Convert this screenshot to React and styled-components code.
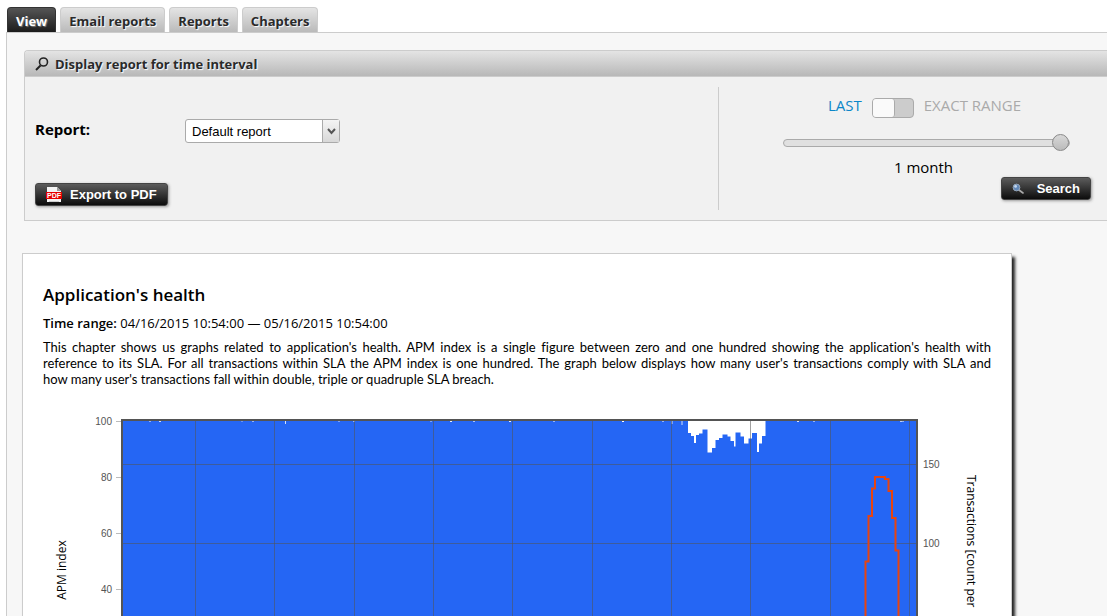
import React, { useState } from 'react'
import styled, { createGlobalStyle } from 'styled-components'

const tabs = ['View', 'Email reports', 'Reports', 'Chapters']

// index drops, [x, y] = start of the step and its depth
const drops = [
    [645, 33], [648, 36], [651, 43], [653, 35], [656, 33.5], [659.5, 29.5],
    [664.5, 52.5], [669, 48], [672.5, 40], [676, 38], [679.5, 34.5], [684.5, 36.5],
    [687.5, 41], [691, 46.5], [692.5, 32.5], [697.5, 36.5], [701, 43.5],
    [705.5, 38.5], [709, 33], [714, 52], [716, 43.5], [719, 36],
]
const dropsEnd = 722.5

const transactions = [
    [822.5, 161.5], [825.5, 116], [829, 88.5], [832, 77], [842, 79],
    [845.5, 91], [849, 118], [852.5, 150.5],
]
const transactionsEnd = 855.5

const gridX = [152.5, 231.5, 311.5, 390.5, 469.5, 549.5, 628.5, 707.5, 787.5, 866.5]
const gridY = [64.5, 143.5]

// single pixel gaps along the top edge
const specks = [
    [106, 0.5], [116, 0.8], [198, 0.3], [209, 0.5], [295, 0.4],
    [310, 0.5], [387, 0.4], [407, 0.9], [430, 0.6], [466, 0.9], [510, 0.5], [579, 1],
    [619, 0.5], [754, 0.8], [770, 0.5], [857, 0.7], [859, 0.5],
]

const dropPath = `M${drops[0][0]} 21` +
    drops.map(([x, y]) => `H${x}V${y}`).join('') + `H${dropsEnd}V21Z`
const transactionPath = `M${transactions[0][0]} 301` +
    transactions.map(([x, y]) => `H${x}V${y}`).join('') + `H${transactionsEnd}V301`

const HealthChart = () => (
    <Chart viewBox="0 0 948 216" role="img" aria-label="Application's health">
        <rect x="79" y="20" width="795" height="282" fill="#2566f4" />
        <path d={dropPath} fill="#fff" />
        {specks.map(([x, opacity]) => (
            <rect key={x} x={x} y="21" width="2" height="1" fill="#fff" opacity={opacity} />
        ))}
        <path d="M242.500 21v3M629 21v3M639 21v4" stroke="#fff" opacity="0.8" />
        <g stroke="#545454" strokeOpacity="0.55">
            {gridX.map(x => <path key={x} d={`M${x} 21V301`} />)}
            {gridY.map(y => <path key={y} d={`M80 ${y}H873`} />)}
        </g>
        <path d={transactionPath} fill="none" stroke="#e8440f" strokeWidth="2" />
        <rect x="79" y="20" width="795" height="282" fill="none" stroke="#545454" strokeWidth="2" />
        {[100, 80, 60, 40].map((value, i) => (
            <g key={value}>
                <path d={`M73 ${21.5 + i * 56}h5`} stroke="#bbb" />
                <text className='tick' x="69" y={25 + i * 56} textAnchor="end">{value}</text>
            </g>
        ))}
        {[150, 100].map((value, i) => (
            <text className='tick' key={value} x="880" y={68 + i * 79}>{value}</text>
        ))}
        <text className='axis' transform="translate(23 170) rotate(-90)" textAnchor="middle">APM index</text>
        <text className='axis' transform="translate(924 75) rotate(90)">Transactions [count per</text>
    </Chart>
)

const Magnifier = () => (
    <svg width="14" height="14" viewBox="0 0 14 14" fill="none" stroke="#222">
        <circle cx="8.500" cy="5" r="4" strokeWidth="1.600" />
        <path d="M5.500 8.500L1 13" strokeWidth="2" />
    </svg>
)

const SearchIcon = () => (
    <svg width="12" height="12" viewBox="0 0 12 12">
        <path d="M7 7l4 3" stroke="#aaa" strokeWidth="1.600" strokeLinecap="round" />
        <circle cx="4.500" cy="4.500" r="3.400" fill="#6288b8" stroke="#95a5b8" />
        <circle cx="3.600" cy="3.400" r="1.400" fill="#c3d8ef" />
    </svg>
)

const PdfIcon = () => (
    <svg width="16" height="16" viewBox="0 0 16 16">
        <path d="M1 0h10l4 4v11H1z" fill="#f4f4f4" />
        <path d="M11 0l4 4h-4z" fill="#999" />
        <path d="M3 14.500h10" stroke="#ccc" />
        <rect y="5" width="16" height="7" fill="#e60000" />
        <text x="8" y="11" fill="#fff" fontSize="7" fontWeight="700"
            fontFamily="Liberation Sans, sans-serif" textAnchor="middle">PDF</text>
    </svg>
)

const App = () => {
    const [active, setActive] = useState('View')
    const [exact, setExact] = useState(false)
    const [interval, setInterval] = useState(100)

    return (
        <>
            <GlobalStyle />
            <Page>
                <TabBar>
                    {tabs.map(tab => (
                        <Tab key={tab} $active={tab === active} onClick={() => setActive(tab)}>{tab}</Tab>
                    ))}
                </TabBar>
                <Content>
                    <Panel>
                        <PanelTitle><Magnifier />Display report for time interval</PanelTitle>
                        <PanelBody>
                            <ReportSide>
                                <Field>
                                    <label htmlFor="report">Report:</label>
                                    <SelectBox>
                                        <select id="report">
                                            <option>Default report</option>
                                        </select>
                                        <span>
                                            <svg width="9" height="7" viewBox="0 0 9 7">
                                                <path d="M1 1l3.500 4L8 1" fill="none" stroke="#555" strokeWidth="2" />
                                            </svg>
                                        </span>
                                    </SelectBox>
                                </Field>
                                <DarkButton><PdfIcon />Export to PDF</DarkButton>
                            </ReportSide>
                            <IntervalSide>
                                <IntervalForm>
                                    <Modes>
                                        <Mode htmlFor="exact" $on={!exact}>LAST</Mode>
                                        <Switch id="exact" type="checkbox" checked={exact}
                                            onChange={() => setExact(!exact)} />
                                        <Mode htmlFor="exact" $on={exact}>EXACT RANGE</Mode>
                                    </Modes>
                                    <Slider id="interval" type="range" value={interval}
                                        onChange={e => setInterval(e.target.value)} />
                                    <label htmlFor="interval">1 month</label>
                                </IntervalForm>
                                <DarkButton $wide><SearchIcon />Search</DarkButton>
                            </IntervalSide>
                        </PanelBody>
                    </Panel>
                    <Sheet>
                        <h1>Application's health</h1>
                        <p className='range'><b>Time range:</b> 04/16/2015 10:54:00 — 05/16/2015 10:54:00</p>
                        <p className='about'>
                            This chapter shows us graphs related to application's health. APM index is a single
                            figure between zero and one hundred showing the application's health with reference
                            to its SLA. For all transactions within SLA the APM index is one hundred. The graph
                            below displays how many user's transactions comply with SLA and how&nbsp;many user's
                            transactions fall within double, triple or quadruple SLA breach.
                        </p>
                        <HealthChart />
                    </Sheet>
                </Content>
            </Page>
        </>
    )
}
export default App

const sans = `'Trebuchet MS', 'Open Sans', sans-serif`
const arial = `'Liberation Sans', Arial, sans-serif`

const GlobalStyle = createGlobalStyle`
* {
    box-sizing: border-box;
}
body {
    margin: 0;
    background: #fff;
    color: #000;
    font-family: ${sans};
    font-size: 13px;
}
`

const Page = styled.div`
padding: 7px 0 0 6px;
overflow: hidden;
`

const TabBar = styled.nav`
display: flex;
gap: 4px;
padding-left: 1px;
`

const Tab = styled.button`
height: 25px;
padding: 2px 8px 0;
border: 1px solid ${p => p.$active ? '#333' : '#ccc'};
border-bottom: 0;
border-radius: 4px 4px 0 0;
background: ${p => p.$active ? 'linear-gradient(#555, #1c1c1c)' : 'linear-gradient(#e4e4e4, #bababa)'};
color: ${p => p.$active ? '#fff' : '#2a2a2a'};
text-shadow: 1px 1px 1px ${p => p.$active ? '#777' : '#fff'};
font: bold 13px ${sans};
cursor: pointer;
`

const Content = styled.main`
padding: 17px 0 0 17px;
border: 1px solid #ccc;
border-width: 1px 0 0 1px;
background: #f7f7f7;
`

const Panel = styled.section`
border: 1px solid #ccc;
border-right: 0;
border-radius: 4px 0 0 0;
background: #f1f1f1;
`

const PanelTitle = styled.h2`
display: flex;
align-items: center;
gap: 6px;
height: 26px;
margin: 0;
padding: 0 10px;
border-bottom: 1px solid #ccc;
border-radius: 3px 0 0 0;
background: linear-gradient(#e4e4e4, #b8b8b8);
color: #2a2a2a;
text-shadow: 1px 1px 1px #fff;
font-size: 13px;
`

const PanelBody = styled.div`
display: flex;
padding: 10px 0;
`

const ReportSide = styled.div`
flex: 1;
display: flex;
flex-direction: column;
align-items: flex-start;
gap: 40px;
padding: 32px 10px 0;
`

const Field = styled.div`
display: flex;
align-items: flex-start;
label {
    width: 150px;
    font-size: 15px;
    font-weight: bold;
    line-height: 20px;
}
`

const SelectBox = styled.div`
position: relative;
select {
    display: block;
    appearance: none;
    width: 155px;
    height: 24px;
    padding: 0 24px 0 6px;
    border: 1px solid #aaa;
    border-radius: 3px;
    background: #fff;
    color: #000;
    font: 13px ${arial};
}
span {
    position: absolute;
    top: 1px;
    right: 1px;
    bottom: 1px;
    width: 17px;
    display: flex;
    align-items: center;
    justify-content: center;
    border-left: 1px solid #aaa;
    background: linear-gradient(#f4f4f4, #d8d8d8);
    pointer-events: none;
}
`

const DarkButton = styled.button`
display: flex;
align-items: center;
gap: ${p => p.$wide ? '13px' : '8px'};
height: 23px;
padding: 0 10px;
border: 1px solid #444;
border-radius: 3px;
background: linear-gradient(#5c5c5c, #0c0c0c);
box-shadow: 1px 1px 3px #999;
color: #fff;
font: bold 13px ${arial};
cursor: pointer;
`

const IntervalSide = styled.div`
flex: 0 0 389px;
display: flex;
flex-direction: column;
align-items: flex-end;
padding: 8px 16px 10px 64px;
border-left: 1px solid #ccc;
`

const IntervalForm = styled.div`
align-self: stretch;
display: flex;
flex-direction: column;
align-items: center;
padding-right: 21px;
> label {
    margin: 7px 6px 1px 0;
    font-size: 15px;
    line-height: 18px;
}
`

const Modes = styled.div`
display: flex;
align-items: flex-start;
gap: 10px;
height: 24px;
padding-right: 4px;
`

const Mode = styled.label`
color: ${p => p.$on ? '#0b86c8' : '#aaa'};
font-size: 15px;
line-height: 20px;
`

const Switch = styled.input`
appearance: none;
width: 42px;
height: 20px;
margin: 3px 0 0;
border: 1px solid #aaa;
border-radius: 4px;
background: #ccc;
&::before {
    content: '';
    display: block;
    width: 21px;
    height: 18px;
    margin-left: ${p => p.checked ? '19px' : '0'};
    border-right: 1px solid #aaa;
    border-radius: 3px;
    background: #fafafa;
}
`

const Slider = styled.input`
appearance: none;
width: 100%;
height: 17px;
margin: 15px 0 0;
background: none;
&::-webkit-slider-runnable-track {
    height: 8px;
    border: 1px solid #aaa;
    border-radius: 4px;
    background: #e0e0e0;
}
&::-webkit-slider-thumb {
    appearance: none;
    width: 17px;
    height: 17px;
    margin-top: -6px;
    border: 1px solid #888;
    border-radius: 50%;
    background: linear-gradient(#d8d8d8, #bbb);
}
`

const Sheet = styled.article`
max-width: 990px;
margin: 32px 94px 0 -2px;
padding: 29px 20px 0;
border: 1px solid #ccc;
border-bottom: 0;
background: #fff;
box-shadow: 3px 4px 3px #222;
h1 {
    margin: 0;
    font-size: 17px;
    font-weight: 600;
    line-height: 24px;
}
p {
    margin: 0;
    line-height: 16px;
}
.range {
    padding: 8px 0;
    b {
        font-weight: 600;
    }
}
.about {
    font-family: 'Trebuchet MS', Lato, sans-serif;
    font-variant-ligatures: none;
    text-align: justify;
}
`

const Chart = styled.svg`
display: block;
width: 100%;
margin-top: 13px;
.tick {
    fill: #545454;
    font: 10px ${arial};
}
.axis {
    font: 12px ${sans};
}
`
